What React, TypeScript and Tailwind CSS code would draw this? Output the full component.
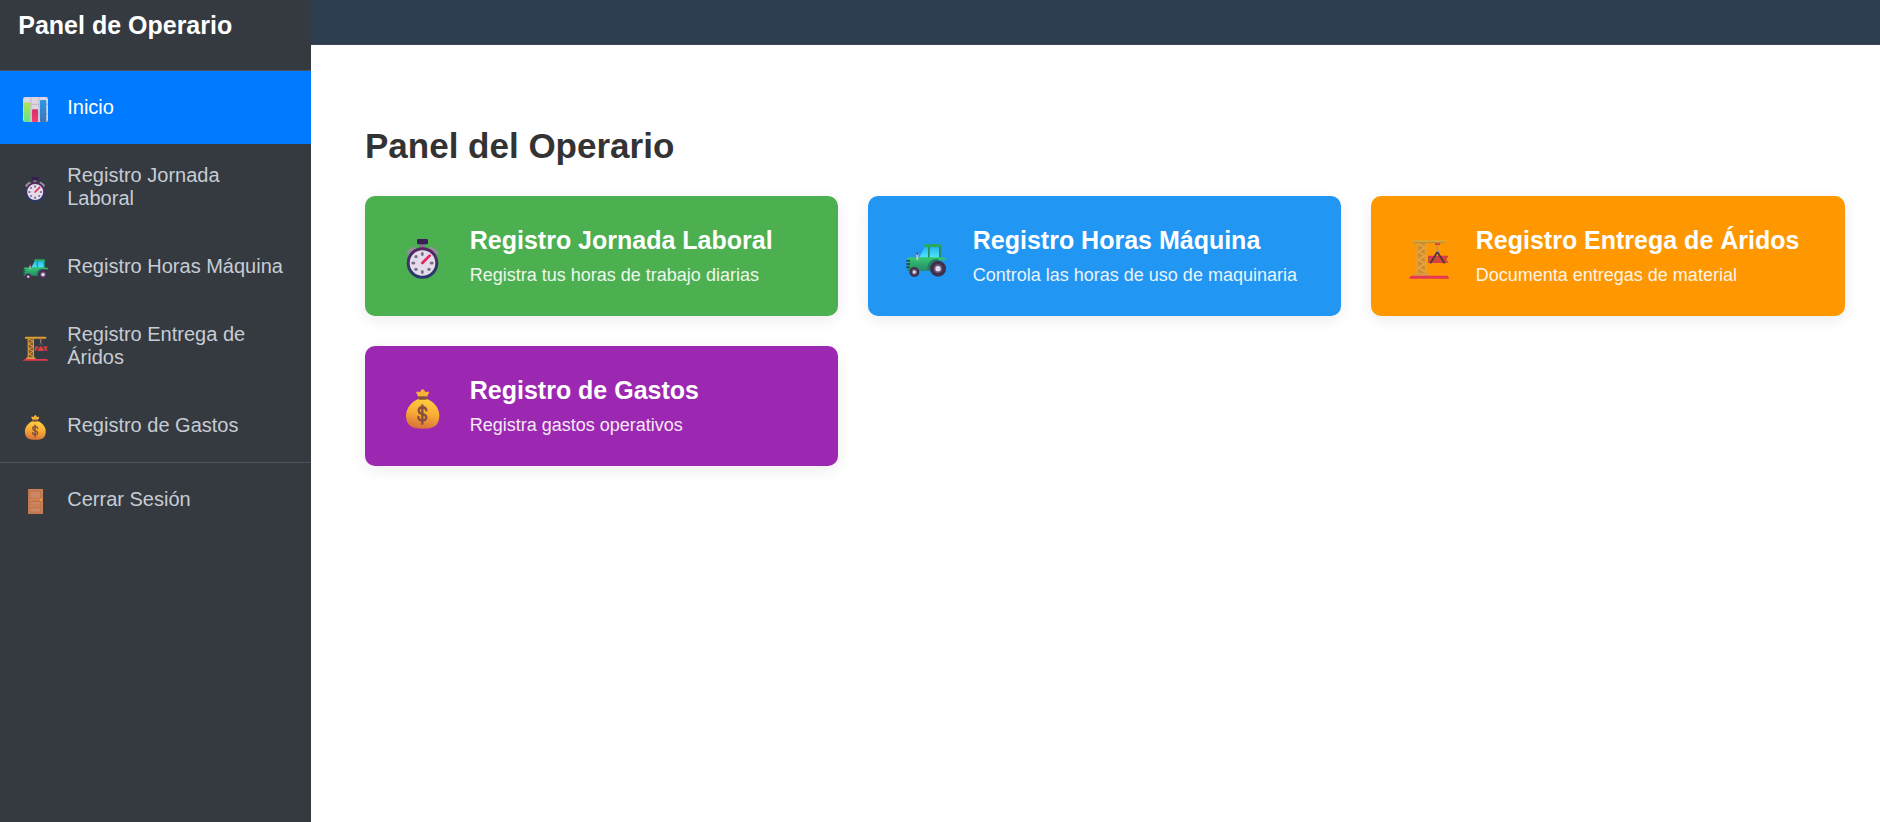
import React from "react";

type IconProps = { className?: string };

function ChartIcon({ className }: IconProps) {
  return (
    <svg viewBox="39 36 75 75" className={className}>
      <defs>
        <linearGradient id="barGreen" x1="0" y1="0" x2="0" y2="1">
          <stop offset="0" stopColor="#b4e052" />
          <stop offset="1" stopColor="#5ee886" />
        </linearGradient>
        <linearGradient id="barBlue" x1="0" y1="0" x2="0" y2="1">
          <stop offset="0" stopColor="#2a9ae8" />
          <stop offset="1" stopColor="#4273b8" />
        </linearGradient>
        <linearGradient id="barRed" x1="0" y1="0" x2="0" y2="1">
          <stop offset="0" stopColor="#d03070" />
          <stop offset="1" stopColor="#f83c70" />
        </linearGradient>
      </defs>
      <rect x="39" y="36" width="75" height="75" rx="7" fill="#dcd6e4" />
      <path d="M63 36v75M87 36v75M39 58h75M39 86h75" stroke="#b9b0c4" strokeWidth="2.5" />
      <rect x="42" y="52" width="19" height="59" rx="3" fill="url(#barGreen)" />
      <rect x="66" y="73" width="18" height="38" rx="3" fill="url(#barRed)" />
      <rect x="90" y="45" width="19" height="66" rx="3" fill="url(#barBlue)" />
    </svg>
  );
}

function StopwatchIcon({ className }: IconProps) {
  return (
    <svg viewBox="39 43 120 120" className={className}>
      <defs>
        <linearGradient id="watchRim" x1="0" y1="0" x2="0" y2="1">
          <stop offset="0" stopColor="#54285f" />
          <stop offset="1" stopColor="#29386e" />
        </linearGradient>
      </defs>
      <rect x="89" y="56" width="15" height="14" fill="#82718f" />
      <rect x="81" y="43" width="33" height="16" rx="4" fill="#371f55" />
      <path d="M58 84l12-10M136 84l-12-10" stroke="#998aa3" strokeWidth="15" strokeLinecap="round" />
      <circle cx="97.5" cy="115" r="43" fill="#e4dced" stroke="url(#watchRim)" strokeWidth="9" />
      <g fill="#77717f">
        <ellipse cx="97" cy="88" rx="4.5" ry="6" />
        <ellipse cx="97" cy="142" rx="4.5" ry="6" />
        <ellipse cx="70" cy="115" rx="6" ry="4.5" />
        <ellipse cx="125" cy="115" rx="6" ry="4.5" />
        <circle cx="78" cy="96" r="5" />
        <circle cx="78" cy="134" r="5" />
        <circle cx="117" cy="134" r="5" />
      </g>
      <path d="M97 115l22-22" stroke="#e92457" strokeWidth="8" strokeLinecap="round" />
    </svg>
  );
}

function TractorIcon({ className }: IconProps) {
  return (
    <svg viewBox="39 43 120 120" className={className}>
      <defs>
        <linearGradient id="tractorGlass" x1="0" y1="0" x2="0" y2="1">
          <stop offset="0" stopColor="#22b4ed" />
          <stop offset="1" stopColor="#55e5fc" />
        </linearGradient>
        <linearGradient id="tractorBody" x1="0" y1="0" x2="0" y2="1">
          <stop offset="0" stopColor="#35c96f" />
          <stop offset="1" stopColor="#258b68" />
        </linearGradient>
      </defs>
      <path d="M79 98l17-32h46v34H79z" fill="url(#tractorGlass)" />
      <path d="M105 66h5v34h-5zM138 66h6v36h-6z" fill="#238b68" />
      <rect x="93" y="58" width="52" height="10" rx="4" fill="#28a865" />
      <path d="M42 104q0-6 8-6h92l17 3v6h-20l-25 31H42z" fill="url(#tractorBody)" />
      <path d="M40 108h11M40 118h11M40 128h10" stroke="#213d4a" strokeWidth="4.5" />
      <path d="M106 137c0-20 10-31 30-31" fill="none" stroke="#237c63" strokeWidth="7" />
      <rect x="70" y="87" width="6" height="20" rx="2" fill="#c9c1d0" />
      <path d="M73 83v8" stroke="#893b56" strokeWidth="4" />
      <circle cx="135" cy="132" r="24" fill="#40304e" />
      <circle cx="135" cy="132" r="13" fill="#6b5b78" />
      <circle cx="135" cy="132" r="8" fill="#e5dced" />
      <circle cx="64" cy="142" r="15" fill="#40304e" />
      <circle cx="64" cy="142" r="8" fill="#786a85" />
      <circle cx="64" cy="142" r="4.5" fill="#e5dced" />
    </svg>
  );
}

function CraneIcon({ className, small }: IconProps & { small?: boolean }) {
  return (
    <svg viewBox="39 43 120 120" className={className}>
      <rect x="62" y="54" width="28" height="94" fill={small ? "#80592f" : "#d08c30"} />
      <path d="M67 57l20 12-20 12 20 12-20 12 20 12-20 12 20 12" fill="none" stroke="#e9aa45" strokeWidth="4" />
      <path d="M64 54v94M89 54v94" stroke="#e3a03b" strokeWidth="5" />
      <path d="M54 154v-4q0-5 7-5h30q8 0 8 5v4z" fill="#dc9a3e" />
      <rect x="48" y="46" width="103" height="10" rx="4" fill="#e0a52d" />
      <path d="M51 54h96" stroke="#a8793b" strokeWidth="2" />
      <rect x="117" y="56" width="15" height="5" fill="#d23a4b" />
      <path d="M124 60v16c0 3 5 3 5 7s-8 5-9 0" fill="none" stroke="#a6919b" strokeWidth="4.5" />
      <path d="M96 94h58l-3 20H96z" fill="#c94d32" />
      <path d="M96 96h60M96 112h60" stroke="#e1344e" strokeWidth="5" />
      <path d="M124 82l-21 34M124 82l22 34" stroke="#443347" strokeWidth="5" />
      <path d="M39 162q2-9 8-9h104q8 0 8 9z" fill="#e83750" />
    </svg>
  );
}

function SmallCraneIcon({ className }: IconProps) {
  return <CraneIcon className={className} small />;
}

function MoneyBagIcon({ className }: IconProps) {
  return (
    <svg viewBox="39 43 120 120" className={className}>
      <defs>
        <linearGradient id="bagBody" x1="0.6" y1="0" x2="0.4" y2="1">
          <stop offset="0" stopColor="#ffcf42" />
          <stop offset="0.5" stopColor="#f8ab34" />
          <stop offset="1" stopColor="#d7703a" />
        </linearGradient>
      </defs>
      <path d="M86 68l-7-13q-1-6 6-4l5 1 4-7q4-3 8 0l4 7 6-1q6-1 5 4l-7 13z" fill="#f7b13b" />
      <path d="M88 72h20c22 6 41 28 40 51-1 31-18 39-50 39s-49-9-50-39c0-23 18-45 40-51z" fill="url(#bagBody)" />
      <rect x="85" y="65" width="26" height="10" rx="4" fill="#85513e" />
      <path d="M109 107c-2-13-23-12-23 1 0 13 23 8 23 20 0 13-23 13-24-1M97 92v55" fill="none" stroke="#85503f" strokeWidth="7" strokeLinecap="round" />
    </svg>
  );
}

function DoorIcon({ className }: IconProps) {
  return (
    <svg viewBox="0 0 75 75" className={className}>
      <rect x="15" y="0" width="45" height="75" rx="2" fill="#c47950" />
      <path d="M17 1h40v73" fill="none" stroke="#df8a57" strokeWidth="2" />
      <g fill="#cc8664" stroke="#b9714f" strokeWidth="2">
        <path d="M21 7h32v22H21zM21 38h32v10H21zM21 56h32v13H21z" />
      </g>
      <path d="M21 32h32M21 51h32" stroke="#ec9054" strokeWidth="2" />
      <circle cx="54" cy="32" r="3" fill="#ffb127" />
    </svg>
  );
}

type Icon = (props: IconProps) => React.JSX.Element;

const menu: { label: string; Icon: Icon; active?: boolean; tall?: boolean }[] = [
  { label: "Inicio", Icon: ChartIcon, active: true },
  { label: "Registro Jornada Laboral", Icon: StopwatchIcon, tall: true },
  { label: "Registro Horas Máquina", Icon: TractorIcon },
  { label: "Registro Entrega de Áridos", Icon: SmallCraneIcon, tall: true },
  { label: "Registro de Gastos", Icon: MoneyBagIcon },
];

const cards: { title: string; text: string; Icon: Icon; color: string }[] = [
  { title: "Registro Jornada Laboral", text: "Registra tus horas de trabajo diarias", Icon: StopwatchIcon, color: "bg-[#4caf50]" },
  { title: "Registro Horas Máquina", text: "Controla las horas de uso de maquinaria", Icon: TractorIcon, color: "bg-[#2196f3]" },
  { title: "Registro Entrega de Áridos", text: "Documenta entregas de material", Icon: CraneIcon, color: "bg-[#ff9800]" },
  { title: "Registro de Gastos", text: "Registra gastos operativos", Icon: MoneyBagIcon, color: "bg-[#9c27b0]" },
];

export default function App() {
  return (
    <div className="flex h-screen w-full overflow-hidden bg-white font-['Liberation_Sans',Arial,sans-serif]">
      <aside className="flex w-[311px] shrink-0 flex-col bg-[#343a40]">
        <div className="h-[71px] border-b border-[#4b545c] px-[18.25px] pt-[11px]">
          <h2 className="text-[25px] leading-[29px] font-bold text-white">Panel de Operario</h2>
        </div>
        <nav>
          {menu.map(({ label, Icon, active, tall }) => (
            <a
              key={label}
              className={`flex items-center pr-[20px] pl-[23px] ${tall ? "h-[86px]" : "h-[73px]"} ${
                active ? "bg-[#007bff] text-white" : "text-[#c7ccd4]"
              }`}
            >
              <Icon className="mt-[4px] mr-[19.25px] size-[25px] shrink-0" />
              <span className="text-[20px] leading-[23px]">{label}</span>
            </a>
          ))}
        </nav>
        <div className="border-t border-[#4b545c]">
          <a className="flex h-[73px] items-center pl-[23px] text-[#c7ccd4]">
            <DoorIcon className="mt-[4px] mr-[19.25px] size-[25px] shrink-0" />
            <span className="text-[20px] leading-[23px]">Cerrar Sesión</span>
          </a>
        </div>
      </aside>
      <div className="flex min-w-0 grow flex-col">
        <header className="h-[45px] border-b border-[#40475a] bg-[#2c3e50]" />
        <main className="pt-[81px] pr-[35px] pl-[54px]">
          <h1 className="mb-[30px] text-[35px] leading-[40px] font-bold text-[#333333]">Panel del Operario</h1>
          <div className="grid grid-cols-[473px_473px_1fr] gap-[30px]">
            {cards.map(({ title, text, Icon, color }) => (
              <div
                key={title}
                className={`flex h-[120px] items-center rounded-[10px] pl-[37.5px] text-white shadow-[0_4px_15px_rgba(0,0,0,0.08)] ${color}`}
              >
                <Icon className="mt-[6px] mr-[27.25px] size-[40px] shrink-0" />
                <div>
                  <h3 className="mb-[10px] text-[25px] leading-[29px] font-bold">{title}</h3>
                  <p className="text-[18px] leading-[21px] opacity-90">{text}</p>
                </div>
              </div>
            ))}
          </div>
        </main>
      </div>
    </div>
  );
}
